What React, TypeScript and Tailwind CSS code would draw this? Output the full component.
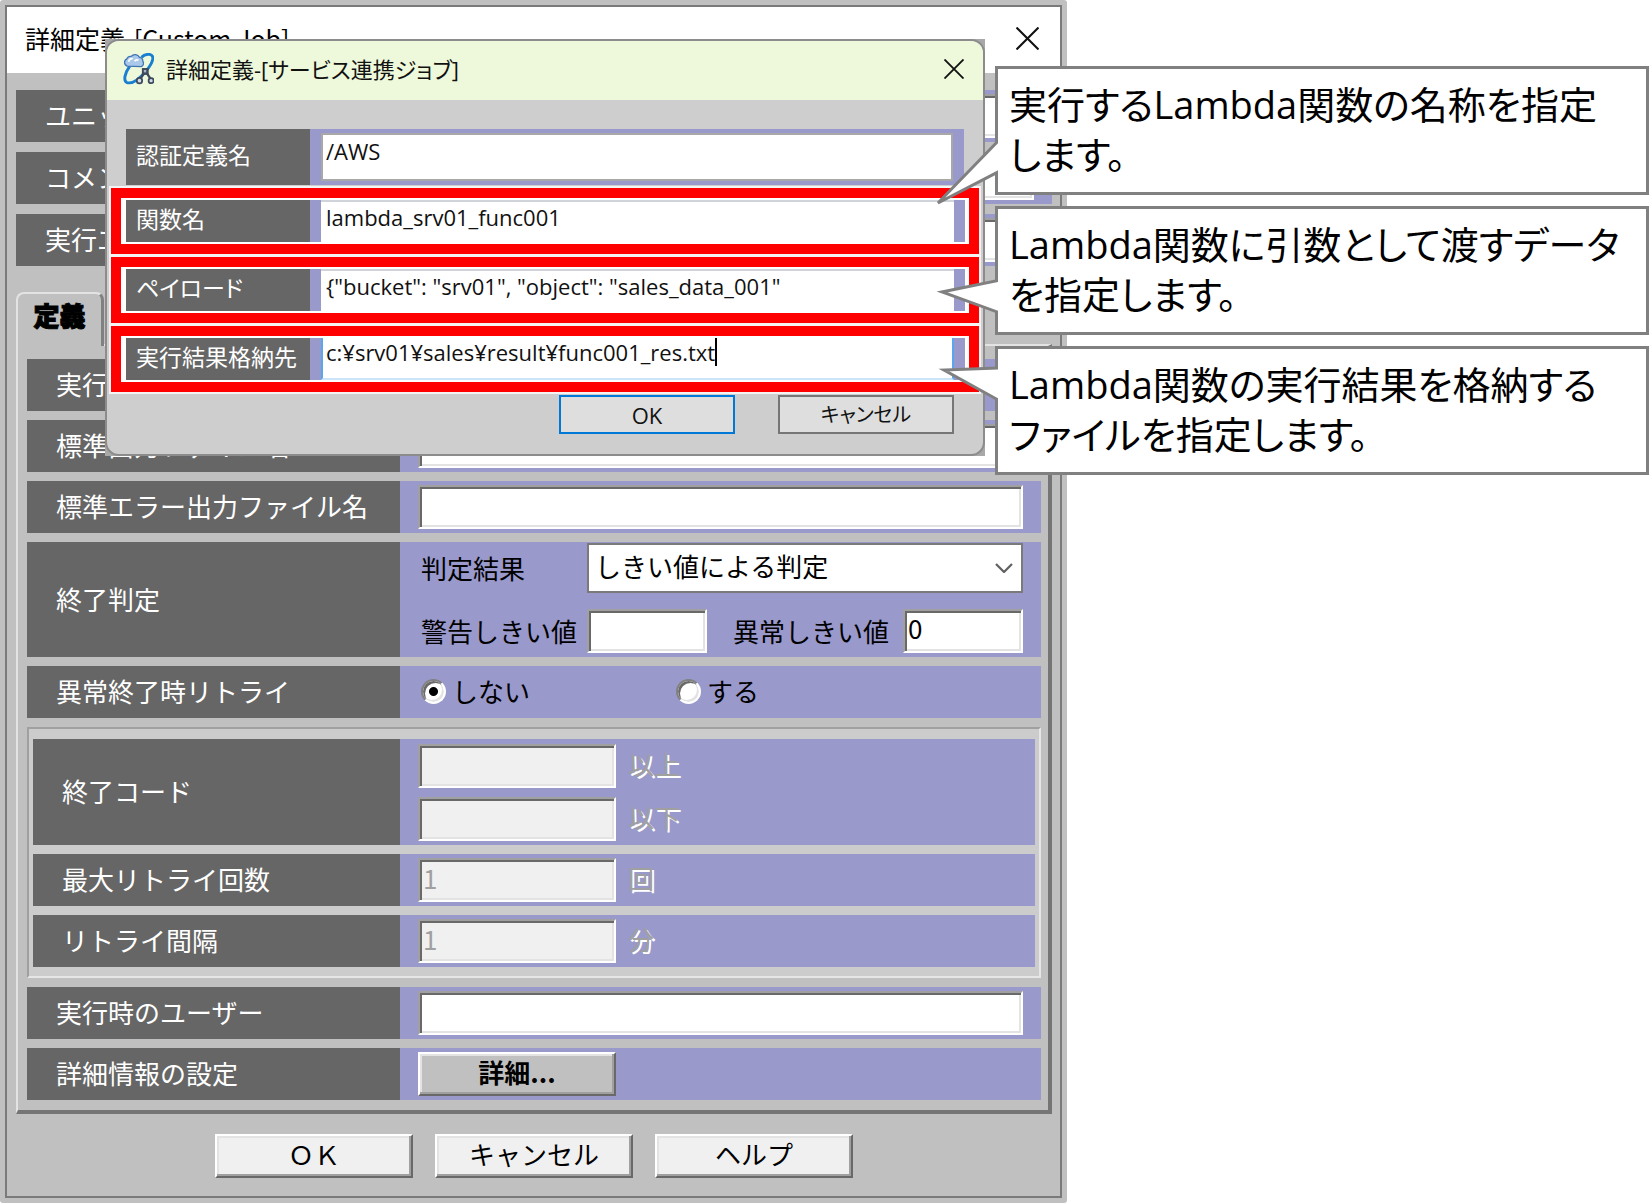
import type { ReactNode } from "react";

const jp = "font-['Noto_Sans_CJK_JP',sans-serif]";
const ui = "font-['Open_Sans','Noto_Sans_CJK_JP',sans-serif] [font-feature-settings:'palt']";

const sunken =
  "h-11 min-w-0 border-2 border-t-[#a0a0a0] border-l-[#a0a0a0] border-r-white border-b-white px-[3px] pb-1.5 text-[26px] leading-8 shadow-[inset_2px_2px_0_#696969,inset_-2px_-2px_0_#e3e3e3] outline-none";
const raised =
  "h-11 border-2 border-t-white border-l-white border-r-[#696969] border-b-[#696969] pb-1 text-[26px] leading-8 shadow-[inset_-2px_-2px_0_#a0a0a0,inset_2px_2px_0_#e3e3e3]";

function TextBox({ id, className = "", disabled = false, value = "", label }: {
  id?: string; className?: string; disabled?: boolean; value?: string; label?: string;
}) {
  return (
    <input
      id={id}
      type="text"
      aria-label={label}
      disabled={disabled}
      defaultValue={value}
      className={`${sunken} ${disabled ? "bg-[#f0f0f0] text-[#a0a0a0]" : "bg-white text-black"} ${className}`}
    />
  );
}

function Row({ label, htmlFor, labelWidth = "w-[373px]", height = "h-[52px]", children }: {
  label: string; htmlFor?: string; labelWidth?: string; height?: string; children?: ReactNode;
}) {
  return (
    <div className={`flex ${height}`}>
      <label
        htmlFor={htmlFor}
        className={`flex shrink-0 items-center whitespace-nowrap bg-[#666666] pb-0.5 pl-[29px] text-[26px] leading-8 text-white ${labelWidth}`}
      >
        {label}
      </label>
      <div className="flex min-w-0 flex-1 items-center bg-[#9999cc] px-[18px]">{children}</div>
    </div>
  );
}

function Unit({ children }: { children: ReactNode }) {
  return (
    <span className="ml-3 pb-1 text-[26px] leading-8 text-[#a0a0a0] [text-shadow:2px_2px_0_white]">{children}</span>
  );
}

function Radio({ label, checked = false, className = "" }: { label: string; checked?: boolean; className?: string }) {
  return (
    <label className={`flex items-center gap-1.5 pb-0.5 text-[26px] leading-8 ${className}`}>
      <input
        type="radio"
        name="retry"
        defaultChecked={checked}
        className="size-[25px] appearance-none rounded-full border-2 border-t-[#808080] border-l-[#808080] border-r-white border-b-white bg-white shadow-[inset_2px_2px_0_#696969,inset_-2px_-2px_0_#e3e3e3] checked:bg-[radial-gradient(circle,black_4px,white_5px)]"
      />
      {label}
    </label>
  );
}

function Cross({ className }: { className: string }) {
  return (
    <svg viewBox="0 0 22 22" className={className} fill="none" stroke="#111" strokeWidth="2">
      <path d="M0.5 0.5 21.5 21.5M21.5 0.5 0.5 21.5" />
    </svg>
  );
}

function MainWindow() {
  return (
    <section className={`mr-[582px] rounded-[3px] bg-[#c0c0c0] p-[5px] text-black ${jp}`}>
      <div className="border-2 border-[#7a7a7a]">
        <header className="flex h-[66px] items-center justify-between bg-white pb-1 pl-[18px] pr-[21px]">
          <h1 className="text-[25px] leading-8">詳細定義-[Custom Job]</h1>
          <button type="button" aria-label="閉じる">
            <Cross className="size-[23px]" />
          </button>
        </header>

        <div className="pb-[18px] pl-[9px] pr-2 pt-[17px]">
          <div className="flex flex-col gap-2.5">
            <Row label="ユニット名" htmlFor="unit" labelWidth="w-[384px]">
              <TextBox id="unit" className="flex-1" />
            </Row>
            <Row label="コメント" htmlFor="comment" labelWidth="w-[384px]">
              <TextBox id="comment" className="flex-1" />
            </Row>
            <Row label="実行エージェント" htmlFor="agent" labelWidth="w-[384px]">
              <TextBox id="agent" className="flex-1" />
            </Row>
          </div>

          <div className="mt-[26px] flex" role="tablist">
            <button
              type="button"
              role="tab"
              aria-selected="true"
              className="relative -mb-0.5 h-[54px] w-[88px] rounded-t-lg border-l-2 border-r-3 border-t-2 border-l-[#e3e3e3] border-r-[#808080] border-t-[#e3e3e3] bg-[#c0c0c0] pb-2.5 text-[26px] font-black leading-8 [-webkit-text-stroke:1px_black]"
            >
              定義
            </button>
          </div>

          <div className="flex flex-col gap-[9px] border-b-4 border-l-2 border-r-4 border-t-2 border-b-[#757575] border-l-[#e3e3e3] border-r-[#757575] border-t-[#e3e3e3] pb-2.5 pl-[9px] pr-[7px] pt-[13px]">
            <Row label="実行ファイル名" />
            <Row label="標準出力ファイル名" htmlFor="stdout">
              <TextBox id="stdout" className="flex-1" />
            </Row>
            <Row label="標準エラー出力ファイル名" htmlFor="stderr">
              <TextBox id="stderr" className="flex-1" />
            </Row>
            <Row label="終了判定" height="h-[115px]">
              <div className="flex flex-1 flex-col gap-4 pb-1 text-[26px] leading-8">
                <div className="flex items-center">
                  <label htmlFor="judge" className="w-[169px] pl-[3px]">判定結果</label>
                  <div className="relative flex-1">
                    <select
                      id="judge"
                      className="h-[50px] w-full appearance-none border-2 border-[#7a7a7a] bg-white pb-1 pl-1.5 text-[26px] leading-8"
                    >
                      <option>しきい値による判定</option>
                    </select>
                    <svg
                      viewBox="0 0 18 10"
                      className="pointer-events-none absolute right-2.5 top-5 h-2.5 w-[18px]"
                      fill="none"
                      stroke="#606060"
                      strokeWidth="2.2"
                    >
                      <path d="M1 1 9 9 17 1" />
                    </svg>
                  </div>
                </div>
                <div className="flex items-center">
                  <label htmlFor="warn" className="w-[169px] shrink-0 whitespace-nowrap pl-[3px]">警告しきい値</label>
                  <TextBox id="warn" className="w-0 flex-1" />
                  <label htmlFor="error" className="w-[196px] shrink-0 whitespace-nowrap pl-[26px]">異常しきい値</label>
                  <TextBox id="error" value="0" className="w-0 flex-1" />
                </div>
              </div>
            </Row>
            <Row label="異常終了時リトライ">
              <Radio label="しない" checked className="w-[258px] pl-[3px]" />
              <Radio label="する" />
            </Row>

            <fieldset className="flex flex-col gap-[9px] border-2 border-b-[#e6e6e6] border-l-[#a0a0a0] border-r-[#e6e6e6] border-t-[#a0a0a0] bg-[#cccccc] px-1 pb-[9px] pt-2.5">
              <Row label="終了コード" labelWidth="w-[367px]" height="h-[106px]">
                <div className="flex flex-col gap-[9px]">
                  <div className="flex items-center">
                    <TextBox disabled label="終了コード 以上" className="w-[198px]" />
                    <Unit>以上</Unit>
                  </div>
                  <div className="flex items-center">
                    <TextBox disabled label="終了コード 以下" className="w-[198px]" />
                    <Unit>以下</Unit>
                  </div>
                </div>
              </Row>
              <Row label="最大リトライ回数" htmlFor="max" labelWidth="w-[367px]">
                <TextBox id="max" disabled value="1" className="w-[198px]" />
                <Unit>回</Unit>
              </Row>
              <Row label="リトライ間隔" htmlFor="interval" labelWidth="w-[367px]">
                <TextBox id="interval" disabled value="1" className="w-[198px]" />
                <Unit>分</Unit>
              </Row>
            </fieldset>

            <Row label="実行時のユーザー" htmlFor="user">
              <TextBox id="user" className="flex-1" />
            </Row>
            <Row label="詳細情報の設定">
              <button type="button" className={`${raised} w-[198px] bg-[#c0c0c0] font-bold`}>詳細...</button>
            </Row>
          </div>

          <div className="mt-5 flex justify-center gap-[22px]">
            <button type="button" className={`${raised} w-[198px] bg-[#f0f0f0]`}>ＯＫ</button>
            <button type="button" className={`${raised} w-[198px] bg-[#f0f0f0]`}>キャンセル</button>
            <button type="button" className={`${raised} w-[198px] bg-[#f0f0f0]`}>ヘルプ</button>
          </div>
        </div>
      </div>
    </section>
  );
}

function ServiceIcon() {
  return (
    <svg viewBox="0 0 32 32" className="h-8 w-[31px]" fill="none">
      <path
        d="M19 4C23 0 29 0 30.500 3C32 7 28 13 24 18C18 25 10 32 4 30C0 28 2 20 7 13"
        stroke="#1a7fd0"
        strokeWidth="3"
      />
      <path
        d="M4.500 13a4 4 0 0 1-.5-7.500A4 4 0 0 1 8.500 3a5 5 0 0 1 8.500 1 4 4 0 0 1 3.500 4 3.500 3.500 0 0 1-2 5.500Z"
        fill="#a9c8ea"
        stroke="#3f75b5"
        strokeWidth="1.300"
      />
      <path d="M6 8.500a3 3 0 0 1 4-3M12 8a3 3 0 0 1 4-1" stroke="white" strokeWidth="1.800" />
      <path d="M23 18 17.500 27M23 18 29 27" stroke="#3d4a5c" strokeWidth="2.400" />
      <rect x="19.500" y="15" width="7" height="7" fill="#3d4a5c" />
      <rect x="21.500" y="17" width="2.500" height="2.500" fill="#aab8c8" />
      <circle cx="17" cy="28" r="2.800" fill="#cfdbe8" stroke="#3d4a5c" strokeWidth="1.800" />
      <circle cx="29" cy="28" r="2.600" fill="#cfdbe8" stroke="#3d4a5c" strokeWidth="1.800" />
    </svg>
  );
}

const nameCell =
  "flex w-[184px] shrink-0 items-center whitespace-nowrap bg-[#666666] pb-1 pl-2.5 text-[23px] leading-8 text-white";

function MarkedRow({ id, label, value, focused = false }: {
  id: string; label: string; value: string; focused?: boolean;
}) {
  return (
    <div className="mx-1 h-[66px] border-10 border-[#ff0000] bg-white py-0.5 pl-[5px] pr-1 ring-2 ring-[#f4f4f4]">
      <div className="flex h-full">
        <label htmlFor={id} className={nameCell}>{label}</label>
        <div className="flex min-w-0 flex-1 bg-[#9999cc] px-[11px]">
          <div
            className={
              focused
                ? "flex flex-1 items-center border-x-2 border-b-2 border-b-[#cce4f7] border-x-[#5aa7ee] bg-white pb-3 pl-[3px]"
                : "flex flex-1 items-center border-t-2 border-t-[#d0d4da] bg-white pb-2.5 pl-[5px]"
            }
          >
            <input
              id={id}
              type="text"
              defaultValue={value}
              className="min-w-0 max-w-full bg-transparent text-[22px] leading-8 outline-none field-sizing-content"
            />
            {focused && <span className="h-7 w-0.5 bg-black" />}
          </div>
        </div>
      </div>
    </div>
  );
}

function ServiceDialog() {
  return (
    <section className={`absolute left-[105px] right-[664px] top-[39px] bg-[#a8a8a8] text-[#111] ${ui}`}>
      <div className="overflow-hidden rounded-[14px] border-2 border-[#8c8c8c] bg-[#cecece]">
        <header className="flex h-[59px] items-center bg-[#eef8da] pb-1 pl-4 pr-[19px]">
          <ServiceIcon />
          <h2 className="ml-3 flex-1 whitespace-nowrap text-[22px] leading-8">詳細定義-[サービス連携ジョブ]</h2>
          <button type="button" aria-label="閉じる">
            <Cross className="size-5" />
          </button>
        </header>
        <div className="flex flex-col gap-[3px] pt-[29px]">
          <div className="ml-[19px] mr-[19px] flex h-14">
            <label htmlFor="auth" className={nameCell}>認証定義名</label>
            <div className="flex min-w-0 flex-1 bg-[#9999cc] px-[11px] py-1">
              <input
                id="auth"
                type="text"
                defaultValue="/AWS"
                className="min-w-0 flex-1 border-2 border-[#a8a8a8] bg-white pb-3 pl-[3px] text-[22px] leading-8 outline-none"
              />
            </div>
          </div>
          <MarkedRow id="func" label="関数名" value="lambda_srv01_func001" />
          <MarkedRow id="payload" label="ペイロード" value={'{"bucket": "srv01", "object": "sales_data_001"'} />
          <MarkedRow id="result" label="実行結果格納先" value="c:¥srv01¥sales¥result¥func001_res.txt" focused />
        </div>
        <footer className="flex justify-end gap-[43px] pb-5 pr-[29px] pt-[3px]">
          <button type="button" className="h-[39px] w-44 border-2 border-[#0078d7] bg-[#dedede] text-[22px] leading-8">
            OK
          </button>
          <button type="button" className="h-[39px] w-44 border-2 border-[#767676] bg-[#dedede] text-[20px] leading-8">
            キャンセル
          </button>
        </footer>
      </div>
    </section>
  );
}

function Callout({ lines, tail }: { lines: string[]; tail: string }) {
  return (
    <div className="relative h-[129px] border-3 border-[#808080] bg-white pl-[11px] pt-2.5">
      <svg
        viewBox="0 0 68 150"
        className="absolute -left-[68px] -top-[3px] h-[150px] w-[68px]"
        fill="white"
        stroke="#808080"
        strokeWidth="3"
      >
        <path d={tail} />
      </svg>
      <p className="relative whitespace-nowrap text-[38px] leading-[50px] text-black">
        {lines[0]}
        <br />
        {lines[1]}
      </p>
    </div>
  );
}

export default function App() {
  return (
    <main className="relative min-w-[1500px] bg-white">
      <MainWindow />
      <ServiceDialog />
      <aside className={`absolute right-0 top-[66px] flex w-[654px] flex-col gap-[11px] ${ui}`}>
        <Callout lines={["実行するLambda関数の名称を指定", "します。"]} tail="M70 73 8 137 70 105" />
        <Callout lines={["Lambda関数に引数として渡すデータ", "を指定します。"]} tail="M70 74 12 86 70 107" />
        <Callout lines={["Lambda関数の実行結果を格納する", "ファイルを指定します。"]} tail="M70 22 14 24 70 55" />
      </aside>
    </main>
  );
}
